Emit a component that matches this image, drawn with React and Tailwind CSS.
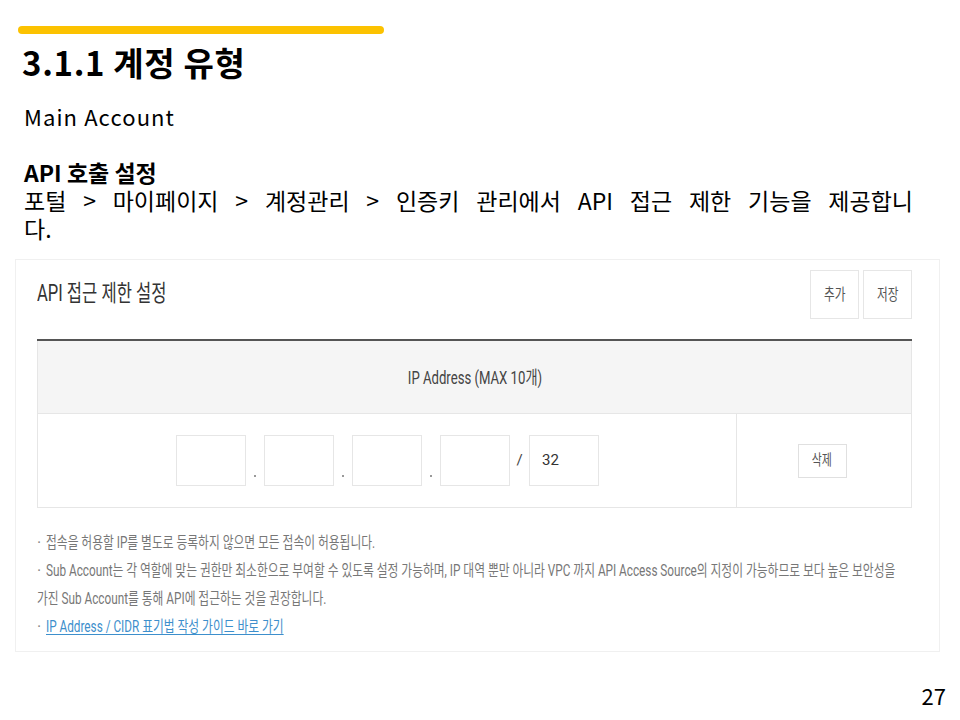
const slideFont = { fontFamily: '"Noto Sans CJK KR", "Noto Sans", sans-serif' };

function Narrow({ children, className = '', origin = 'origin-left', scale = 'scale-x-[0.73]' }) {
    return <span className={`inline-block ${scale} ${origin} ${className}`}>{children}</span>;
}

function IpBox({ value }) {
    return (
        <div className="flex h-[51px] w-[70px] items-center border border-[#e6e6e6] bg-white pl-[12px] text-[15px] text-[#333]">
            {value}
        </div>
    );
}

function Dot() {
    return (
        <div className="flex h-[51px] w-[18px] items-end justify-center pb-[9px]">
            <span className="h-[2px] w-[2px] rounded-full bg-[#777]" />
        </div>
    );
}

function Note({ bullet = true, children }) {
    return (
        <div className="flex h-[28px] items-center whitespace-nowrap leading-[28px]">
            {bullet && <span className="w-[9px] shrink-0 text-[#888]">·</span>}
            <Narrow scale="scale-x-[0.735]">{children}</Narrow>
        </div>
    );
}

function ApiAccessCard() {
    return (
        <div
            className="ml-[15px] mt-[17px] flex h-[393px] w-[925px] flex-col overflow-hidden border border-[#f0f0f0] pl-[21px] pr-[27px] pt-[10px]"
            style={{ fontFamily: 'Roboto, "Noto Sans CJK KR", sans-serif' }}
        >
            {/* title + buttons */}
            <div className="flex h-[49px] items-center justify-between">
                <span className="whitespace-nowrap text-[23px] text-[#333]">
                    <Narrow scale="scale-x-[0.72]">API 접근 제한 설정</Narrow>
                </span>
                <div className="flex gap-[4px]">
                    <button className="flex h-[49px] w-[49px] items-center justify-center border border-[#e6e6e6] bg-white text-[16px] text-[#555]">
                        <Narrow origin="origin-center">추가</Narrow>
                    </button>
                    <button className="flex h-[49px] w-[49px] items-center justify-center border border-[#e6e6e6] bg-white text-[16px] text-[#555]">
                        <Narrow origin="origin-center">저장</Narrow>
                    </button>
                </div>
            </div>

            {/* table */}
            <div className="mt-[20px] border-t-2 border-[#555]">
                <div className="flex h-[73px] items-center justify-center border-x border-b border-[#e6e6e6] bg-[#f5f5f5] text-[18px] text-[#444]">
                    <Narrow origin="origin-center">IP Address (MAX 10개)</Narrow>
                </div>
                <div className="flex h-[94px] border-x border-b border-[#e6e6e6]">
                    <div className="flex w-[699px] items-center justify-center border-r border-[#e6e6e6] pl-[1px]">
                        <IpBox />
                        <Dot />
                        <IpBox />
                        <Dot />
                        <IpBox />
                        <Dot />
                        <IpBox />
                        <div className="flex h-[51px] w-[19px] items-center justify-center text-[15px] text-[#444]">/</div>
                        <IpBox value="32" />
                    </div>
                    <div className="flex flex-1 items-center justify-center pr-[4px]">
                        <button className="flex h-[34px] w-[49px] items-center justify-center border border-[#e0e0e0] bg-white text-[15px] text-[#555]">
                            <Narrow origin="origin-center">삭제</Narrow>
                        </button>
                    </div>
                </div>
            </div>

            {/* notes */}
            <div className="mt-[21px] overflow-hidden text-[16px] text-[#777]">
                <Note>접속을 허용할 IP를 별도로 등록하지 않으면 모든 접속이 허용됩니다.</Note>
                <Note>Sub Account는 각 역할에 맞는 권한만 최소한으로 부여할 수 있도록 설정 가능하며, IP 대역 뿐만 아니라 VPC 까지 API Access Source의 지정이 가능하므로 보다 높은 보안성을</Note>
                <Note bullet={false}>가진 Sub Account를 통해 API에 접근하는 것을 권장합니다.</Note>
                <Note>
                    <span className="text-[#3d8fcc] underline underline-offset-2">IP Address / CIDR 표기법 작성 가이드 바로 가기</span>
                </Note>
            </div>
        </div>
    );
}

export default function App() {
    return (
        <div className="flex h-[720px] w-[960px] flex-col overflow-hidden bg-white pt-[26px] text-black" style={slideFont}>
            <div className="ml-[18px] h-[8px] w-[366px] rounded-full bg-[#fcc200]" />

            <h1 className="ml-[22px] mt-[8px] text-[33px] font-bold leading-[40px] tracking-[0.02em] text-black">3.1.1 계정 유형</h1>

            <p className="ml-[24px] mt-[19px] text-[22px] leading-[30px] tracking-[0.05em]">Main Account</p>

            <div className="ml-[24px] mt-[27px] w-[889px] text-[23px] leading-[28px]">
                <div className="font-bold">API 호출 설정</div>
                <div className="text-justify [text-align-last:justify]">
                    포털 &gt; 마이페이지 &gt; 계정관리 &gt; 인증키 관리에서 API 접근 제한 기능을 제공합니
                </div>
                <div>다.</div>
            </div>

            <ApiAccessCard />

            <div className="mt-auto flex justify-end pb-[10px] pr-[14px]">
                <span className="text-[22px] leading-[30px]">27</span>
            </div>
        </div>
    );
}
